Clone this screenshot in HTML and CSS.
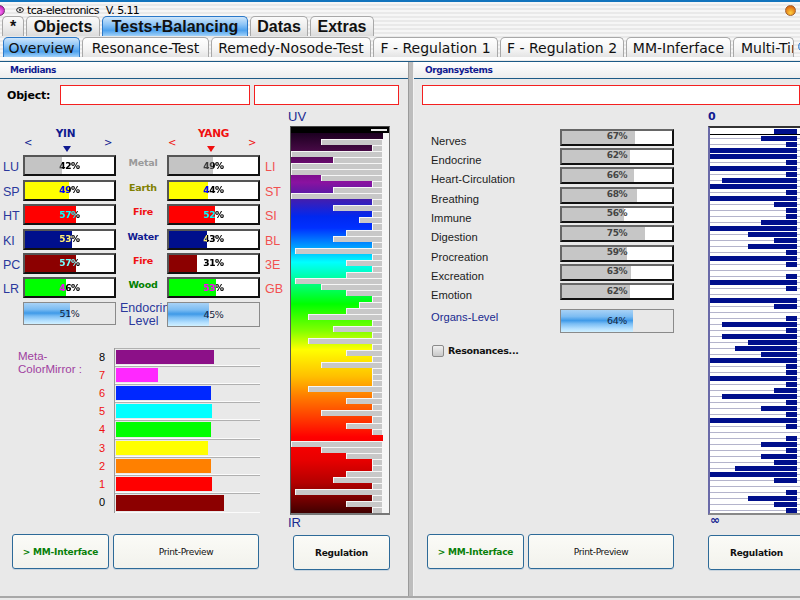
FILE: index.html
```html
<!DOCTYPE html>
<html lang="en">
<head>
<meta charset="utf-8">
<title>tca-electronics V. 5.11</title>
<link rel="stylesheet" href="styles.css">
</head>
<body>
<div class="app">
  <header class="chrome">
    <div class="titlebar">
      <span class="orb orb-pink"></span>
      <svg class="eye" width="8" height="6" viewBox="0 0 8 6"><ellipse cx="4" cy="3" rx="3.4" ry="2.4" fill="none" stroke="#222" stroke-width="1"/><circle cx="4" cy="3" r="1.1" fill="#222"/></svg>
      <span class="app-name">tca-electronics</span>
      <span class="app-ver">V. 5.11</span>
      <span class="orb orb-orange"></span>
    </div>
    <nav class="tabs main-tabs">
      <span class="tab w-star">*</span>
      <span class="tab w-objects">Objects</span>
      <span class="tab active w-tests">Tests+Balancing</span>
      <span class="tab w-datas">Datas</span>
      <span class="tab w-extras">Extras</span>
    </nav>
    <nav class="tabs sub-tabs">
      <span class="tab active w-over">Overview</span>
      <span class="tab w-reso">Resonance-Test</span>
      <span class="tab w-reme">Remedy-Nosode-Test</span>
      <span class="tab w-f1">F - Regulation 1</span>
      <span class="tab w-f2">F - Regulation 2</span>
      <span class="tab w-mm">MM-Inferface</span>
      <span class="tab w-multi">Multi-Time</span>
      <span class="orb orb-blue"></span>
    </nav>
  </header>
  <main class="panels">
    <section class="panel panel-left">
      <h2 class="panel-head">Meridians</h2>
      <div class="object-row">
        <label class="object-label">Object:</label>
        <span class="field field-a"></span>
        <span class="field field-b"></span>
      </div>
      <div class="content">
        <div class="left-col">
          <div class="mer-grid">
            <span></span>
            <div class="pol pol-yin"><b>YIN</b><div class="pol-arrows"><i>&lt;</i><u class="tri"></u><i>&gt;</i></div></div>
            <span></span>
            <div class="pol pol-yang"><b>YANG</b><div class="pol-arrows"><i>&lt;</i><u class="tri"></u><i>&gt;</i></div></div>
            <span></span>

            <span class="mer yin">LU</span>
            <div class="bar"><div class="fill c-gray" style="width:42%"></div><span class="pct">42%</span></div>
            <span class="el c-metal">Metal</span>
            <div class="bar"><div class="fill c-gray" style="width:49%"></div><span class="pct">49%</span></div>
            <span class="mer yang">LI</span>

            <span class="mer yin">SP</span>
            <div class="bar"><div class="fill c-yellow" style="width:49%"></div><span class="pct">49%</span></div>
            <span class="el c-earth">Earth</span>
            <div class="bar"><div class="fill c-yellow" style="width:44%"></div><span class="pct">44%</span></div>
            <span class="mer yang">ST</span>

            <span class="mer yin">HT</span>
            <div class="bar"><div class="fill c-red" style="width:57%"></div><span class="pct">57%</span></div>
            <span class="el c-fire">Fire</span>
            <div class="bar"><div class="fill c-red" style="width:52%"></div><span class="pct">52%</span></div>
            <span class="mer yang">SI</span>

            <span class="mer yin">KI</span>
            <div class="bar"><div class="fill c-navy" style="width:53%"></div><span class="pct">53%</span></div>
            <span class="el c-water">Water</span>
            <div class="bar"><div class="fill c-navy" style="width:43%"></div><span class="pct">43%</span></div>
            <span class="mer yang">BL</span>

            <span class="mer yin">PC</span>
            <div class="bar"><div class="fill c-maroon" style="width:57%"></div><span class="pct">57%</span></div>
            <span class="el c-fire">Fire</span>
            <div class="bar"><div class="fill c-maroon" style="width:31%"></div><span class="pct">31%</span></div>
            <span class="mer yang">3E</span>

            <span class="mer yin">LR</span>
            <div class="bar"><div class="fill c-green" style="width:46%"></div><span class="pct">46%</span></div>
            <span class="el c-wood">Wood</span>
            <div class="bar"><div class="fill c-green" style="width:53%"></div><span class="pct">53%</span></div>
            <span class="mer yang">GB</span>

            <span></span>
            <div class="level"><div class="level-fill" style="width:51%"></div><span class="level-pct">51%</span></div>
            <div class="endo"><span>Endocrine</span><span class="endo-2">Level</span></div>
            <div class="level level-tall"><div class="level-fill" style="width:45%"></div><span class="level-pct">45%</span></div>
            <span></span>
          </div>

          <div class="meta">
            <div class="meta-label">Meta-<br>ColorMirror :</div>
            <div class="meta-nums">
              <span>8</span><span class="n-red">7</span><span class="n-red">6</span><span class="n-red">5</span><span class="n-red">4</span><span class="n-red">3</span><span class="n-red">2</span><span class="n-red">1</span><span>0</span>
            </div>
            <div class="meta-bars">
              <div class="mrow"><div class="mfill" style="width:98px;background:#8c1088"></div></div>
              <div class="mrow"><div class="mfill" style="width:42px;background:#ff28ff"></div></div>
              <div class="mrow"><div class="mfill" style="width:95px;background:#0028ff"></div></div>
              <div class="mrow"><div class="mfill" style="width:96px;background:#00ffff"></div></div>
              <div class="mrow"><div class="mfill" style="width:95px;background:#00ff00"></div></div>
              <div class="mrow"><div class="mfill" style="width:92px;background:#ffff00"></div></div>
              <div class="mrow"><div class="mfill" style="width:95px;background:#ff8000"></div></div>
              <div class="mrow"><div class="mfill" style="width:96px;background:#ff0000"></div></div>
              <div class="mrow mrow-last"><div class="mfill" style="width:108px;background:#8c0000"></div></div>
            </div>
          </div>

          <div class="btns">
            <button class="btn btn-mm">&gt; MM-Interface</button>
            <button class="btn btn-print">Print-Preview</button>
          </div>
        </div>

        <div class="spec-col">
          <div class="spec-cap">UV</div>
          <div class="spec-frame">
            <div class="spec-top"><span class="spec-ind"></span></div>
            <div class="spec-plot">
              <div class="sr"></div><div class="sr"><i style="width:62px"></i></div><div class="sr"><i style="width:11px"></i></div><div class="sr"><i style="width:92px"></i></div><div class="sr"><i style="width:50px"></i></div><div class="sr"><i style="width:92px"></i></div><div class="sr"><i style="width:92px"></i></div><div class="sr"><i style="width:62px"></i></div>
              <div class="sr"><i style="width:11px"></i></div><div class="sr"><i style="width:50px"></i></div><div class="sr"><i style="width:92px"></i></div><div class="sr"><i style="width:11px"></i></div><div class="sr"><i style="width:50px"></i></div><div class="sr"><i style="width:11px"></i></div><div class="sr"><i style="width:24px"></i></div><div class="sr"><i style="width:11px"></i></div>
              <div class="sr"><i style="width:37px"></i></div><div class="sr"><i style="width:50px"></i></div><div class="sr"><i style="width:11px"></i></div><div class="sr"><i style="width:88px"></i></div><div class="sr"><i style="width:11px"></i></div><div class="sr"><i style="width:37px"></i></div><div class="sr"><i style="width:11px"></i></div><div class="sr"><i style="width:37px"></i></div>
              <div class="sr"><i style="width:88px"></i></div><div class="sr"><i style="width:62px"></i></div><div class="sr"><i style="width:37px"></i></div><div class="sr"><i style="width:11px"></i></div><div class="sr"><i style="width:24px"></i></div><div class="sr"><i style="width:37px"></i></div><div class="sr"><i style="width:75px"></i></div><div class="sr"><i style="width:11px"></i></div>
              <div class="sr"><i style="width:50px"></i></div><div class="sr"><i style="width:11px"></i></div><div class="sr"><i style="width:75px"></i></div><div class="sr"><i style="width:11px"></i></div><div class="sr"><i style="width:37px"></i></div><div class="sr"><i style="width:11px"></i></div><div class="sr"><i style="width:62px"></i></div><div class="sr"><i style="width:11px"></i></div>
              <div class="sr"><i style="width:11px"></i></div><div class="sr"><i style="width:11px"></i></div><div class="sr"><i style="width:75px"></i></div><div class="sr"><i style="width:11px"></i></div><div class="sr"><i style="width:37px"></i></div><div class="sr"><i style="width:11px"></i></div><div class="sr"><i style="width:62px"></i></div><div class="sr"><i style="width:11px"></i></div>
              <div class="sr"><i style="width:37px"></i></div><div class="sr"><i style="width:11px"></i></div><div class="sr"></div><div class="sr"><i style="width:92px"></i></div><div class="sr"><i style="width:62px"></i></div><div class="sr"><i style="width:37px"></i></div><div class="sr"><i style="width:11px"></i></div><div class="sr"><i style="width:11px"></i></div>
              <div class="sr"><i style="width:37px"></i></div><div class="sr"><i style="width:50px"></i></div><div class="sr"><i style="width:11px"></i></div><div class="sr"><i style="width:88px"></i></div><div class="sr"><i style="width:11px"></i></div><div class="sr"><i style="width:37px"></i></div><div class="sr"><i style="width:11px"></i></div>
            </div>
          </div>
          <div class="spec-cap spec-cap-ir">IR</div>
          <button class="btn btn-reg">Regulation</button>
        </div>
      </div>
    </section>

    <div class="divider"></div>

    <section class="panel panel-right">
      <h2 class="panel-head">Organsystems</h2>
      <div class="object-row object-row-r">
        <span class="field field-c"></span>
      </div>
      <div class="content content-r">
        <div class="org-col">
          <div class="org-grid">
            <span class="org">Nerves</span><div class="obar"><div class="ofill" style="width:66%"></div><span class="opct">67%</span></div>
            <span class="org">Endocrine</span><div class="obar"><div class="ofill" style="width:62%"></div><span class="opct">62%</span></div>
            <span class="org">Heart-Circulation</span><div class="obar"><div class="ofill" style="width:65%"></div><span class="opct">66%</span></div>
            <span class="org">Breathing</span><div class="obar"><div class="ofill" style="width:68%"></div><span class="opct">68%</span></div>
            <span class="org">Immune</span><div class="obar"><div class="ofill" style="width:56%"></div><span class="opct">56%</span></div>
            <span class="org">Digestion</span><div class="obar"><div class="ofill" style="width:75%"></div><span class="opct">75%</span></div>
            <span class="org">Procreation</span><div class="obar"><div class="ofill" style="width:59%"></div><span class="opct">59%</span></div>
            <span class="org">Excreation</span><div class="obar"><div class="ofill" style="width:63%"></div><span class="opct">63%</span></div>
            <span class="org">Emotion</span><div class="obar"><div class="ofill" style="width:62%"></div><span class="opct">62%</span></div>
            <span class="org org-level">Organs-Level</span><div class="level level-org"><div class="level-fill" style="width:64%"></div><span class="level-pct">64%</span></div>
          </div>
          <label class="reso"><span class="check"></span>Resonances...</label>
          <div class="btns btns-r">
            <button class="btn btn-mm">&gt; MM-Interface</button>
            <button class="btn btn-print">Print-Preview</button>
          </div>
        </div>
        <div class="inf-col">
          <div class="inf-cap">0</div>
          <div class="inf-frame">
            <div class="ir ir-top"><i style="width:23px"></i></div><div class="ir"><i style="width:36px"></i></div><div class="ir"><i style="width:11px"></i></div><div class="ir"><i style="width:88px"></i></div><div class="ir"><i style="width:87px"></i></div><div class="ir"><i style="width:11px"></i></div><div class="ir"><i style="width:88px"></i></div><div class="ir"><i style="width:11px"></i></div>
            <div class="ir"><i style="width:75px"></i></div><div class="ir"><i style="width:88px"></i></div><div class="ir"><i style="width:11px"></i></div><div class="ir"><i style="width:87px"></i></div><div class="ir"><i style="width:23px"></i></div><div class="ir"><i style="width:11px"></i></div><div class="ir"><i style="width:11px"></i></div><div class="ir"><i style="width:36px"></i></div>
            <div class="ir"><i style="width:88px"></i></div><div class="ir"><i style="width:49px"></i></div><div class="ir"><i style="width:23px"></i></div><div class="ir"><i style="width:49px"></i></div><div class="ir"><i style="width:11px"></i></div><div class="ir"><i style="width:88px"></i></div><div class="ir"><i style="width:11px"></i></div><div class="ir"></div>
            <div class="ir"><i style="width:11px"></i></div><div class="ir"><i style="width:87px"></i></div><div class="ir"><i style="width:11px"></i></div><div class="ir"></div><div class="ir"><i style="width:88px"></i></div><div class="ir"><i style="width:23px"></i></div><div class="ir"></div><div class="ir"><i style="width:11px"></i></div>
            <div class="ir"><i style="width:75px"></i></div><div class="ir"><i style="width:11px"></i></div><div class="ir"><i style="width:75px"></i></div><div class="ir"><i style="width:49px"></i></div><div class="ir"><i style="width:62px"></i></div><div class="ir"><i style="width:36px"></i></div><div class="ir"><i style="width:88px"></i></div><div class="ir"><i style="width:11px"></i></div>
            <div class="ir"><i style="width:11px"></i></div><div class="ir"><i style="width:87px"></i></div><div class="ir"><i style="width:11px"></i></div><div class="ir"><i style="width:23px"></i></div><div class="ir"><i style="width:75px"></i></div><div class="ir"><i style="width:11px"></i></div><div class="ir"><i style="width:36px"></i></div><div class="ir"><i style="width:11px"></i></div>
            <div class="ir"><i style="width:88px"></i></div><div class="ir"><i style="width:11px"></i></div><div class="ir"></div><div class="ir"><i style="width:11px"></i></div><div class="ir"><i style="width:36px"></i></div><div class="ir"><i style="width:11px"></i></div><div class="ir"><i style="width:36px"></i></div><div class="ir"><i style="width:23px"></i></div>
            <div class="ir"><i style="width:62px"></i></div><div class="ir"><i style="width:88px"></i></div><div class="ir"><i style="width:23px"></i></div><div class="ir"></div><div class="ir"><i style="width:11px"></i></div><div class="ir"><i style="width:49px"></i></div><div class="ir"><i style="width:23px"></i></div><div class="ir"><i style="width:11px"></i></div>
          </div>
          <div class="inf-cap inf-cap-end">&infin;</div>
          <button class="btn btn-reg btn-reg-r">Regulation</button>
        </div>
      </div>
    </section>
  </main>
</div>
</body>
</html>
```
FILE: styles.css
```css
* { box-sizing: border-box; }
html, body { margin: 0; padding: 0; }
body {
  width: 800px; height: 600px; overflow: hidden;
  background: #e9e9e9;
  font-family: "Liberation Sans", Arial, sans-serif;
  color: #000;
}
.app { width: 800px; height: 600px; display: flex; flex-direction: column; overflow: hidden; }

/* chrome */
.chrome {
  height: 61px; flex: none;
  border-top: 2px solid #1274bd;
  background: repeating-linear-gradient(#f6f6f6 0 2px, #e9e9e9 2px 4px);
}
.titlebar { height: 13px; display: flex; align-items: center; font-size: 11px; padding-top: 3px; font-family: "DejaVu Sans", sans-serif; letter-spacing: -0.6px; }
.orb { display: block; width: 11px; height: 11px; border-radius: 50%; flex: none; }
.orb-pink { background: radial-gradient(circle at 50% 65%, #ff80ff, #b000a0); border: 1px solid #703070; margin-left: -6px; }
.orb-orange { background: radial-gradient(circle at 50% 75%, #ffd040, #d04800); border: 1px solid #a06030; margin-left: auto; margin-right: 4px; }
.orb-blue { background: radial-gradient(circle at 50% 60%, #ffffff, #60a8f0); border: 1px solid #4080c8; margin: 0 0 5px 2px; }
.eye { margin-left: 11px; flex: none; }
.app-name { margin-left: 3px; }
.app-ver { margin-left: 7px; }

.tabs { display: flex; align-items: flex-end; }
.main-tabs { height: 20px; padding-left: 2px; gap: 2px; margin-top: 1px; }
.sub-tabs { height: 24px; padding: 0 0 0 3px; gap: 2px; border-bottom: 3px solid #fcfcfc; }
.tab {
  display: flex; align-items: center; justify-content: center; flex: none;
  white-space: nowrap; overflow: hidden;
  border: 1px solid #a8a8a8; border-bottom: none;
  border-radius: 5px 5px 0 0;
  background: linear-gradient(#fbfbfb, #ececec 55%, #dcdcdc);
  color: #111;
}
.main-tabs .tab { height: 20px; font: bold 16px "Liberation Sans", sans-serif; }
.sub-tabs .tab { height: 20px; font: 14px "DejaVu Sans", sans-serif; background: linear-gradient(#fff, #f4f4f4 60%, #e4e4e4); }
.tabs .tab.active {
  border-color: #2a78c8;
  background: linear-gradient(#cfe6fb, #8cc4f6 40%, #4ea2ee 70%, #9fd0f8);
}
.w-star { width: 22px; }
.w-objects { width: 74px; }
.w-tests { width: 146px; }
.w-datas { width: 58px; }
.w-extras { width: 64px; }
.w-over { width: 77px; }
.w-reso { width: 127px; }
.w-reme { width: 160px; }
.w-f1 { width: 125px; }
.w-f2 { width: 124px; }
.w-mm { width: 105px; }
.tabs .w-multi { width: 61px; justify-content: flex-start; padding-left: 7px; }

/* panels */
.panels { flex: 1; display: flex; min-height: 0; border-bottom: 2px solid #a8a8a8; margin-bottom: 2px; border-top: 1px solid #1d5a86; }
.panel { display: flex; flex-direction: column; min-width: 0; }
.panel-left { width: 408px; flex: none; }
.panel-right { width: 386px; flex: none; overflow: hidden; }
.divider { width: 6px; flex: none; background: #bdbdbd; border-left: 1px solid #9a9a9a; border-right: 1px solid #f2f2f2; }
.panel-head {
  margin: 0; height: 17px; flex: none;
  border-bottom: 1px solid #1d5a86;
  background: linear-gradient(#ffffff, #ededed);
  color: #101a90; font: bold 9px "DejaVu Sans", sans-serif; letter-spacing: -0.45px;
  padding: 3px 0 0 10px;
}
.panel-right .panel-head { padding-left: 11px; }
.object-row { display: flex; align-items: center; height: 20px; margin-top: 6px; flex: none; }
.object-label { font: bold 11px "DejaVu Sans", sans-serif; letter-spacing: -0.2px; width: 60px; padding-left: 7px; }
.field { display: block; height: 20px; background: #fff; border: 1px solid #f42020; }
.field-a { width: 190px; }
.field-b { width: 145px; margin-left: 4px; }
.field-c { width: 400px; margin-left: 8px; }

.content { flex: 1; display: flex; min-height: 0; }
.left-col { width: 290px; flex: none; }

/* meridians */
.mer-grid {
  display: grid;
  grid-template-columns: 23px 93px 51px 93px 20px;
  grid-auto-rows: 21px;
  grid-template-rows: 24px;
  row-gap: 3.4px;
  padding-top: 23px;
}
.pol { text-align: center; margin-bottom: -3.4px; font: bold 10.5px "DejaVu Sans", sans-serif; letter-spacing: -0.3px; }
.pol b { display: block; line-height: 11px; }
.pol-yin b { padding-right: 8px; }
.pol-yin { color: #101a90; }
.pol-yang { color: #f01010; }
.pol-arrows { display: flex; justify-content: space-between; align-items: flex-start; padding: 0 6px 0 1px; height: 13px; line-height: 7px; }
.pol-arrows i { font-style: normal; font-size: 10px; font-weight: normal; width: 6px; }
.tri { display: block; width: 0; height: 0; margin-top: 7px; border: 4.5px solid transparent; border-bottom: 0; border-top: 6px solid currentColor; }
.mer { font-size: 12.5px; line-height: 24px; padding-left: 3px; }
.mer.yin { color: #2a389c; }
.mer.yang { color: #f25050; padding-left: 5px; }
.bar {
  position: relative; isolation: isolate; background: #fff;
  border: 2px solid #111; border-top-color: #555; border-left-color: #555;
  display: flex; align-items: center; justify-content: center;
  overflow: hidden;
}
.fill { position: absolute; left: 0; top: 0; bottom: 0; }
.pct { position: relative; color: #fff; mix-blend-mode: difference; font: bold 9px "DejaVu Sans", sans-serif; letter-spacing: -0.3px; }
.c-gray { background: #c4c4c4; }
.c-yellow { background: #ffff00; }
.c-red { background: #ff0000; }
.c-navy { background: #000f8c; }
.c-maroon { background: #8c0000; }
.c-green { background: #00ff00; }
.el { font: bold 9.5px "DejaVu Sans", sans-serif; letter-spacing: -0.2px; text-align: center; line-height: 15px; padding-left: 3px; }
.c-metal { color: #9a9a9a; }
.c-earth { color: #808000; }
.c-fire { color: #f01010; }
.c-water { color: #101a90; }
.c-wood { color: #008000; }
.level {
  position: relative; background: #e8e8e8; border: 1px solid #8a8a8a;
  display: flex; align-items: center; justify-content: center;
  height: 23px;
}
.level-tall { height: 25px; }
.level-fill {
  position: absolute; left: 0; top: 0; bottom: 0;
  background: linear-gradient(#a8d2f6, #7cbcf2 30%, #3f9ae8 48%, #78bcf4 62%, #b4e0ff 85%, #d0f0ff);
}
.level-pct { position: relative; font: 9.5px "DejaVu Sans", sans-serif; letter-spacing: -0.4px; color: #14233c; }
.endo { font-size: 12.5px; color: #2a389c; line-height: 13px; white-space: nowrap; padding: 0 0 0 4px; height: 26px; }
.endo span { display: block; }
.endo-2 { text-align: center; }

/* meta */
.meta { display: flex; margin-top: 25px; }
.meta-label { width: 81px; padding: 2px 0 0 18px; font-size: 11.5px; line-height: 13px; color: #a040a0; white-space: nowrap; }
.meta-nums { width: 33px; display: flex; flex-direction: column; font: 11px "Liberation Sans", sans-serif; }
.meta-nums span { height: 18.2px; line-height: 18px; padding-left: 18px; }
.n-red { color: #f01010; }
.meta-bars { width: 146px; border-left: 1px solid #9a9a9a; }
.mrow { height: 18.2px; padding: 1px 0 1px 1px; border-top: 1px solid #b0b0b0; border-bottom: 1px solid #fbfbfb; }
.mrow-last { height: 20px; }
.mfill { height: 100%; }

/* buttons */
.btn {
  display: block; height: 35px; padding: 0; cursor: default;
  border: 1px solid #2d6a98; border-radius: 3px;
  background: linear-gradient(#fbfbf7, #f2f2ec);
  font: 9px "DejaVu Sans", sans-serif; letter-spacing: -0.35px; color: #111;
  box-shadow: 0 1px 0 #c8d4de;
}
.btns { display: flex; gap: 4px; margin-top: 21px; padding-left: 12px; }
.btn-mm { width: 97px; color: #088008; font-weight: bold; letter-spacing: -0.2px; }
.btn-print { width: 146px; }
.btn-reg { width: 97px; font-weight: bold; letter-spacing: -0.2px; margin-left: 3px; }

/* spectrum */
.spec-col { width: 100px; flex: none; }
.spec-cap { height: 21px; padding: 5px 0 0 0; font-size: 13px; line-height: 14px; color: #1a2a90; margin-left: -2px; }
.spec-cap-ir { height: 15px; padding: 1px 0 0; margin-bottom: 5px; }
.spec-frame {
  width: 100px; height: 389px;
  border: 1px solid #777; border-top: 1px solid #444; border-left-color: #555; border-bottom: 2px solid #777;
  background: #f6f6f6;
  display: flex; flex-direction: column;
}
.spec-top { height: 6px; flex: none; background: #000; display: flex; justify-content: flex-end; padding: 2px 2px 0 0; }
.spec-ind { display: block; width: 16px; height: 2px; background: #e8e8e8; }
.spec-plot {
  flex: 1; width: 92px; display: flex; flex-direction: column;
  background: linear-gradient(#1c0020 0%, #4a0a48 5%, #6a0a70 8%, #8a12a0 13%, #4a1ca8 17%, #0028f0 22%, #0030ff 25%, #00a0ff 30%, #00ffff 34%, #00ff90 39%, #00ff00 45%, #80ff00 52%, #ffff00 57%, #ffc000 64%, #ff8000 69%, #ff3000 76%, #ff0000 80%, #e80000 86%, #b40000 92%, #400000 100%);
}
.sr { flex: 1; display: flex; justify-content: flex-end; }
.sr i {
  display: block; height: 100%;
  background: #c8c8c8; border: 1px solid #f6f6f6; border-bottom: none;
}

/* organs */
.org-col { width: 294px; flex: none; }
.org-grid {
  display: grid; grid-template-columns: 129px 114px; grid-auto-rows: 17px; row-gap: 2.35px;
  padding: 23.5px 0 0 17px;
}
.org { font-size: 11.2px; line-height: 24px; color: #1c1c1c; white-space: nowrap; }
.org-level { color: #1a2a90; line-height: 16px; margin-top: 6px; }
.obar { position: relative; background: #fff; border: 2px solid #111; border-top-color: #666; border-left-color: #666; display: flex; align-items: center; justify-content: center; }
.ofill { position: absolute; left: 0; top: 0; bottom: 0; background: #c6c6c6; }
.opct { position: relative; font: bold 9px "DejaVu Sans", sans-serif; letter-spacing: -0.3px; color: #444; margin-top: -2px; }
.level-org { height: 24px; margin-top: 6px; }
.reso { display: flex; align-items: center; margin: 25px 0 0 18px; font: bold 9.5px "DejaVu Sans", sans-serif; letter-spacing: -0.3px; color: #111; }
.check { display: block; width: 12px; height: 12px; margin-right: 4px; border: 1px solid #8a8a8a; border-radius: 2px; background: linear-gradient(#f0f0f0, #c8c8c8); }
.btns-r { margin-top: 177.5px; padding-left: 13px; }

/* infinity plot */
.inf-col { width: 96px; flex: none; }
.inf-cap { height: 21px; padding: 5px 0 0 0; font: bold 11px "DejaVu Sans", sans-serif; line-height: 14px; color: #101a90; }
.inf-cap-end { height: 15px; padding: 0 0 0 2px; margin-bottom: 5px; font-size: 12px; line-height: 11px; }
.inf-frame {
  width: 96px; height: 389px; background: #fff;
  border-top: 2px solid #333; border-bottom: 2px solid #888; border-left: 2px solid #6a6aa8;
  display: flex; flex-direction: column;
}
.ir {
  flex: 1; display: flex; justify-content: flex-end; align-items: center; padding-right: 7px;
  background: linear-gradient(#fff 0 45%, #b4b4cc 45% 72%, #fff 72%);
}
.ir i { display: block; height: 5px; background: #000f8c; }
.ir-top { background: #fff; border-bottom: 1px solid #000; }
.btn-reg-r { margin-left: 0; }
```
